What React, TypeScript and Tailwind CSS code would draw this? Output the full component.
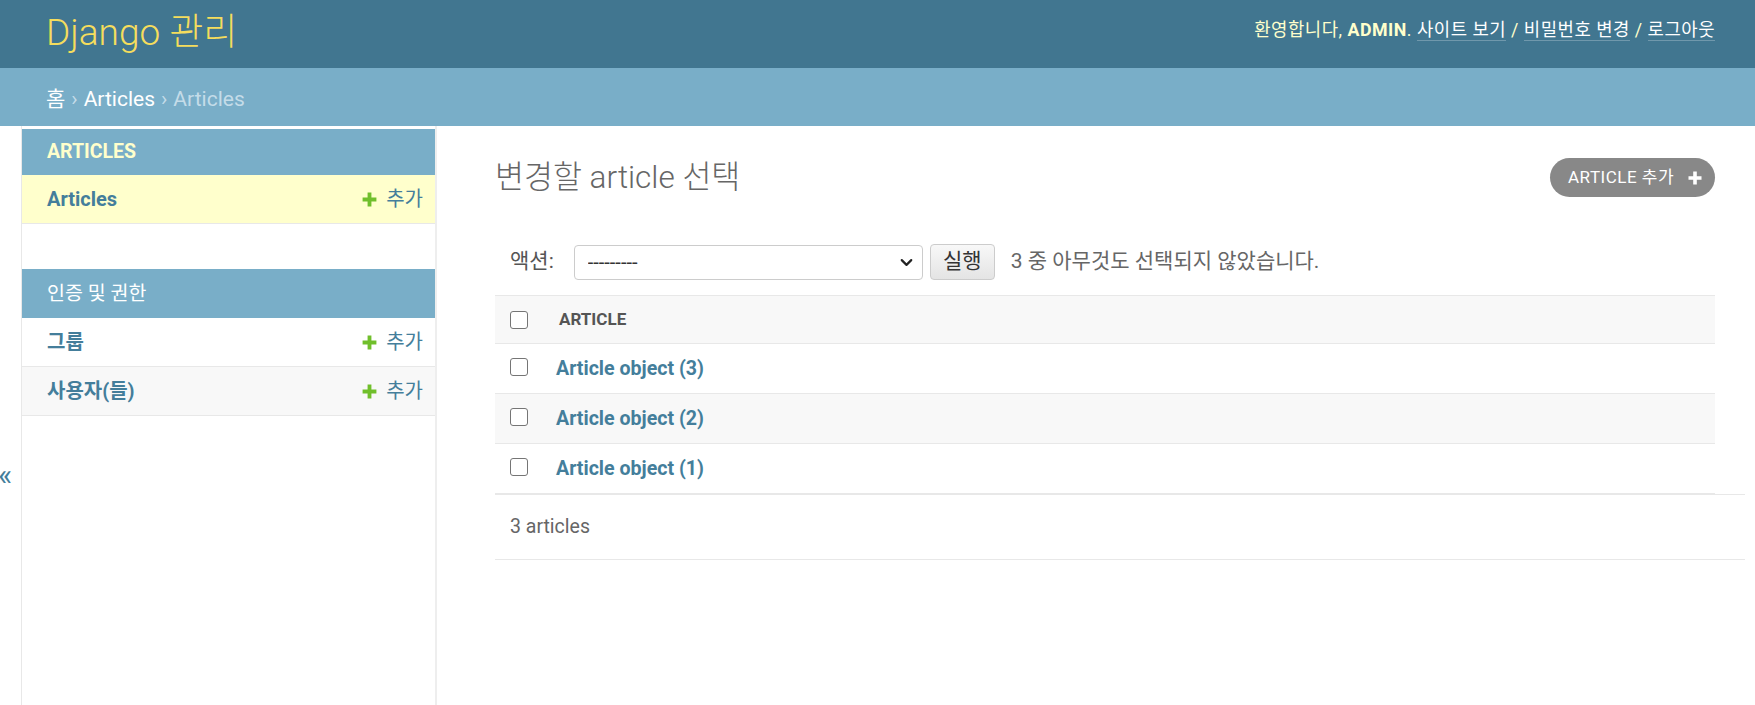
import { ChevronDown } from 'lucide-react';

const FONT = "font-['Roboto','Noto_Sans_CJK_KR',sans-serif]";

function AddIcon({ className }: { className?: string }) {
  return (
    <svg viewBox="0 0 16 16" className={className} aria-hidden="true">
      <path d="M6.2 1.5h3.6v4.7h4.7v3.6H9.8v4.7H6.2V9.8H1.5V6.2h4.7z" fill="currentColor" />
    </svg>
  );
}

function CheckBox() {
  return <span className="block w-[18px] h-[18px] rounded-[3px] border-[1.5px] border-[#757575] bg-white" />;
}

interface SideRow {
  name: string;
  current?: boolean;
  alt?: boolean;
}

function SideModule({ caption, current, rows, captionHeight }: { caption: string; current?: boolean; rows: SideRow[]; captionHeight: string }) {
  return (
    <div>
      <div
        className={`${captionHeight} bg-[#79aec8] flex items-center pl-[25px] text-[19.5px] ${
          current ? 'text-[#ffffcc] font-bold uppercase' : 'text-white'
        }`}
      >
        {caption}
      </div>
      {rows.map(r => (
        <div
          key={r.name}
          className={`h-[49px] flex items-center justify-between pl-[25px] pr-[12px] border-b border-[#e8e8e8] ${
            r.current ? 'bg-[#ffffcc]' : r.alt ? 'bg-[#f8f8f8]' : 'bg-white'
          }`}
        >
          <span className="text-[20px] font-bold text-[#447e9b]">{r.name}</span>
          <span className="flex items-center gap-[8px] text-[20px] text-[#447e9b]">
            <AddIcon className="w-[17px] h-[17px] text-[#70bf2b]" />
            추가
          </span>
        </div>
      ))}
    </div>
  );
}

const articles = [3, 2, 1];

export default function App() {
  return (
    <div className={`${FONT} h-screen overflow-hidden bg-white text-[#333] flex flex-col`}>
      {/* Header */}
      <header className="h-[68px] shrink-0 bg-[#417690] flex items-center justify-between pl-[46px] pr-[40px]">
        <div className="text-[37px] font-light text-[#f5dd5d] leading-none mb-[4px]">Django 관리</div>
        <div className="text-[17.8px] tracking-[0.5px] text-[#ffffcc] mb-[8px] leading-[24px]">
          환영합니다, <strong className="font-bold">ADMIN</strong>.{' '}
          <a className="text-white border-b border-white/25">사이트 보기</a> /{' '}
          <a className="text-white border-b border-white/25">비밀번호 변경</a> /{' '}
          <a className="text-white border-b border-white/25">로그아웃</a>
        </div>
      </header>

      {/* Breadcrumbs */}
      <div className="h-[58px] shrink-0 bg-[#79aec8] flex items-center pl-[46px] pt-[5px] text-[21px] text-[#c4dce8]">
        <span className="text-white">홈</span>
        <span className="mx-[6px]">›</span>
        <span className="text-white">Articles</span>
        <span className="mx-[6px]">›</span>
        <span>Articles</span>
      </div>

      <div className="flex-1 flex min-h-0">
        {/* Sidebar toggle */}
        <div className="w-[22px] shrink-0 border-r border-[#e8e8e8] flex flex-col">
          <span className="mt-[334px] -ml-[2px] text-[30px] leading-none text-[#447e9b]">«</span>
        </div>

        {/* Sidebar */}
        <nav className="w-[415px] shrink-0 border-r-2 border-[#eeeeee] pt-[3px]">
          <SideModule caption="Articles" current captionHeight="h-[46px]" rows={[{ name: 'Articles', current: true }]} />
          <div className="h-[45px]" />
          <SideModule
            caption="인증 및 권한"
            captionHeight="h-[49px]"
            rows={[{ name: '그룹' }, { name: '사용자(들)', alt: true }]}
          />
        </nav>

        {/* Content */}
        <main className="flex-1 min-w-0 pl-[58px] pr-[10px] pt-[32px]">
          <div className="mr-[30px] h-[39px] flex items-center justify-between">
            <h1 className="text-[31.5px] font-light text-[#666] leading-[36px]">변경할 article 선택</h1>
            <a className="h-[39px] w-[165px] rounded-full bg-[#888] text-white flex items-center justify-between pl-[18px] pr-[12px] text-[17px] tracking-[0.5px] uppercase">
              <span>Article 추가</span>
              <AddIcon className="w-[16px] h-[16px] text-white" />
            </a>
          </div>

          {/* Actions */}
          <div className="mt-[47px] h-[36px] flex items-center pl-[15px] text-[21px]">
            <label className="text-[#555] mr-[20px]">액션:</label>
            <div className="relative w-[349px] h-[35px]">
              <select
                defaultValue=""
                className={`${FONT} appearance-none w-full h-full border border-[#cccccc] rounded-[4px] bg-white pl-[13px] text-[20px] text-[#333]`}
              >
                <option value="">---------</option>
                <option value="delete">선택된 articles 을/를 삭제합니다.</option>
              </select>
              <ChevronDown className="absolute right-[7px] top-[8px] w-[19px] h-[19px] text-[#222] pointer-events-none" strokeWidth={2.75} />
            </div>
            <button
              className={`${FONT} ml-[7px] w-[65px] h-[36px] rounded-[4px] border border-[#cccccc] bg-gradient-to-b from-[#f8f8f8] to-[#e4e4e4] text-[21px] text-[#333]`}
            >
              실행
            </button>
            <span className="ml-[16px] text-[#666]">3 중 아무것도 선택되지 않았습니다.</span>
          </div>

          {/* Result table */}
          <div className="mt-[15px] mr-[30px]">
            <div className="h-[49px] flex items-center bg-[#f8f8f8] border-t border-b border-[#e8e8e8]">
              <div className="w-[64px] pl-[15px]">
                <CheckBox />
              </div>
              <span className="text-[17px] font-bold text-[#555] uppercase">Article</span>
            </div>
            {articles.map((n, i) => (
              <div
                key={n}
                className={`h-[50px] flex items-start pt-[14px] border-b border-[#e8e8e8] ${i === 1 ? 'bg-[#f8f8f8]' : 'bg-white'}`}
              >
                <div className="w-[61px] pl-[15px]">
                  <CheckBox />
                </div>
                <a className="text-[19.6px] font-bold text-[#447e9b] leading-[20px] mt-[1px]">Article object ({n})</a>
              </div>
            ))}
          </div>

          {/* Paginator */}
          <div className="h-[66px] flex items-center pl-[15px] border-t border-b border-[#e8e8e8] text-[19.5px] text-[#666]">
            3 articles
          </div>
        </main>
      </div>
    </div>
  );
}
